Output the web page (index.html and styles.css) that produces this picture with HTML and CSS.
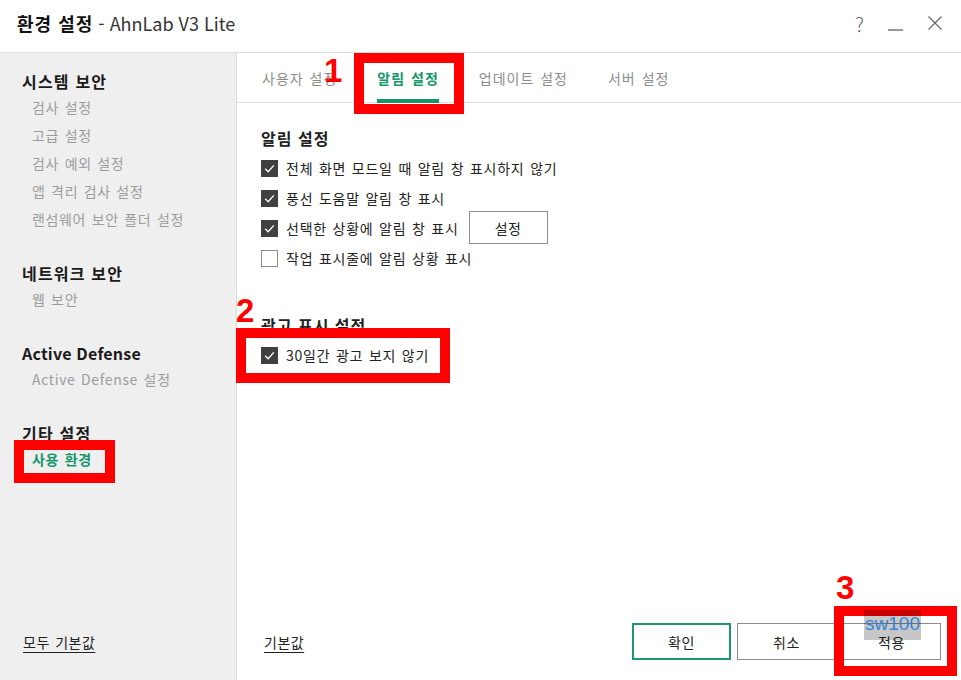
FILE: index.html
```html
<!DOCTYPE html>
<html lang="ko">
<head>
<meta charset="utf-8">
<title>환경 설정 - AhnLab V3 Lite</title>
<link rel="stylesheet" href="styles.css">
</head>
<body>
<div class="window">
  <header class="titlebar">
    <div class="title"><b>환경 설정</b> - AhnLab V3 Lite</div>
    <div class="controls">
      <span class="help">?</span>
      <svg class="ctl min" width="16" height="16" viewBox="0 0 16 16"><line x1="0" y1="15" x2="15" y2="15" stroke="#555" stroke-width="1.2"/></svg>
      <svg class="ctl" width="16" height="16" viewBox="0 0 16 16"><path d="M1.5 1.5 L14.5 14.5 M14.5 1.5 L1.5 14.5" stroke="#666" stroke-width="1.1" fill="none"/></svg>
    </div>
  </header>
  <div class="body">
    <aside class="sidebar">
      <div class="group">
        <div class="ghead">시스템 보안</div>
        <div class="gitem">검사 설정</div>
        <div class="gitem">고급 설정</div>
        <div class="gitem">검사 예외 설정</div>
        <div class="gitem">앱 격리 검사 설정</div>
        <div class="gitem">랜섬웨어 보안 폴더 설정</div>
      </div>
      <div class="group">
        <div class="ghead">네트워크 보안</div>
        <div class="gitem">웹 보안</div>
      </div>
      <div class="group">
        <div class="ghead latin">Active Defense</div>
        <div class="gitem">Active Defense 설정</div>
      </div>
      <div class="group">
        <div class="ghead">기타 설정</div>
        <div class="gitem active">사용 환경</div>
      </div>
      <div class="foot">
        <a class="link">모두 기본값</a>
      </div>
    </aside>
    <main class="main">
      <nav class="tabs">
        <span class="tab">사용자 설정</span>
        <span class="tab on">알림 설정</span>
        <span class="tab">업데이트 설정</span>
        <span class="tab">서버 설정</span>
      </nav>
      <section class="content">
        <div class="sec">
          <div class="shead">알림 설정</div>
          <div class="row"><span class="cb checked"><svg width="17" height="17" viewBox="0 0 17 17"><polyline points="4.2,8.8 7.2,11.8 12.8,5.4" fill="none" stroke="#fff" stroke-width="1.3"/></svg></span>전체 화면 모드일 때 알림 창 표시하지 않기</div>
          <div class="row"><span class="cb checked"><svg width="17" height="17" viewBox="0 0 17 17"><polyline points="4.2,8.8 7.2,11.8 12.8,5.4" fill="none" stroke="#fff" stroke-width="1.3"/></svg></span>풍선 도움말 알림 창 표시</div>
          <div class="row"><span class="cb checked"><svg width="17" height="17" viewBox="0 0 17 17"><polyline points="4.2,8.8 7.2,11.8 12.8,5.4" fill="none" stroke="#fff" stroke-width="1.3"/></svg></span>선택한 상황에 알림 창 표시<button class="btn small">설정</button></div>
          <div class="row"><span class="cb"></span>작업 표시줄에 알림 상황 표시</div>
        </div>
        <div class="sec sec2">
          <div class="shead">광고 표시 설정</div>
          <div class="row"><span class="cb checked"><svg width="17" height="17" viewBox="0 0 17 17"><polyline points="4.2,8.8 7.2,11.8 12.8,5.4" fill="none" stroke="#fff" stroke-width="1.3"/></svg></span>30일간 광고 보지 않기</div>
        </div>
      </section>
      <div class="foot mainfoot">
        <a class="link">기본값</a>
        <div class="buttons">
          <button class="btn primary">확인</button>
          <button class="btn">취소</button>
          <button class="btn">적용</button>
        </div>
      </div>
    </main>
  </div>

  <div class="mark box1"></div>
  <div class="mark box2"></div>
  <div class="mark box3"></div>
  <div class="mark box4"></div>
  <div class="num n1">1</div>
  <div class="num n2">2</div>
  <div class="num n3">3</div>
  <div class="wm">sw100</div>
</div>
</body>
</html>
```
FILE: styles.css
```css
* { box-sizing: border-box; }
html, body { margin: 0; padding: 0; }
body {
  width: 961px;
  height: 680px;
  overflow: hidden;
  background: #fff;
  font-family: "Noto Sans CJK KR", "Noto Sans", sans-serif;
  color: #222;
}
.window {
  position: relative;
  width: 961px;
  height: 680px;
  display: flex;
  flex-direction: column;
}
.titlebar {
  height: 53px;
  flex: none;
  border-bottom: 1px solid #dedede;
  display: flex;
  align-items: center;
  justify-content: space-between;
  padding: 0 18px 6px 17px;
}
.title {
  font-size: 18px;
  color: #333;
}
.title b { color: #111; font-weight: 700; letter-spacing: 1px; }
.controls {
  display: flex;
  align-items: center;
}
.help {
  font-size: 20px;
  color: #666;
  font-weight: 300;
  margin-right: 24px;
}
.ctl { display: block; }
.ctl.min { margin-right: 23px; }
.body {
  flex: 1;
  display: flex;
  min-height: 0;
}
.sidebar {
  width: 237px;
  flex: none;
  background: #efeff0;
  border-right: 1px solid #dadada;
  display: flex;
  flex-direction: column;
  padding-top: 16px;
}
.group { display: flex; flex-direction: column; margin-bottom: 28px; }
.ghead {
  height: 24px;
  line-height: 24px;
  padding-left: 22px;
  font-size: 16px;
  font-weight: 700;
  color: #1b1b1b;
  letter-spacing: 1.2px;
}
.ghead.latin { letter-spacing: 0.2px; }
.gitem {
  height: 28px;
  line-height: 28px;
  padding-left: 32px;
  font-size: 14px;
  color: #9c9c9c;
  word-spacing: 1px;
  letter-spacing: 0.65px;
}
.gitem.active { color: #14966a; font-weight: 700; }
.foot {
  margin-top: auto;
  height: 37px;
  margin-bottom: 20px;
  display: flex;
  align-items: center;
}
.sidebar .foot { padding-left: 23px; }
.link {
  font-size: 14px;
  color: #222;
  text-decoration: underline;
  text-underline-offset: 4px;
  word-spacing: 1px;
  letter-spacing: 0.5px;
}
.main {
  flex: 1;
  display: flex;
  flex-direction: column;
}
.tabs {
  height: 50px;
  flex: none;
  border-bottom: 1px solid #dedede;
  display: flex;
  gap: 40px;
  padding-left: 25px;
}
.tab {
  display: flex;
  align-items: center;
  font-size: 14px;
  color: #8d8d8d;
  padding-top: 1px;
  word-spacing: 1px;
  letter-spacing: 1px;
}
.tab.on {
  color: #14966a;
  font-weight: 700;
  border-bottom: 4px solid #14966a;
  margin-bottom: -1px;
  padding-top: 3px;
}
.content {
  padding: 20px 0 0 24px;
}
.sec { display: flex; flex-direction: column; }
.sec2 { margin-top: 37px; }
.shead {
  height: 30px;
  line-height: 30px;
  font-size: 16px;
  font-weight: 700;
  color: #222;
  letter-spacing: 1px;
}
.row {
  height: 30px;
  display: flex;
  align-items: center;
  font-size: 14px;
  color: #222;
  word-spacing: 1px;
  letter-spacing: 0.75px;
}
.cb {
  width: 17px;
  height: 17px;
  flex: none;
  margin-right: 8px;
  border: 1px solid #8a8a8a;
  background: #fff;
  display: block;
}
.cb.checked { background: #404040; border-color: #404040; }
.cb svg { display: block; margin: -1px; }
.btn {
  font-family: inherit;
  font-size: 14px;
  color: #222;
  background: #fff;
  border: 1px solid #8c8c8c;
  width: 99px;
  height: 37px;
  padding: 0;
  letter-spacing: 0.5px;
}
.btn.small {
  width: 79px;
  height: 33px;
  margin: -2px 0 -1px 10px;
}
.btn.primary { border: 2px solid #1c9673; }
.mainfoot {
  padding: 0 20px 0 27px;
  justify-content: space-between;
}
.buttons { display: flex; gap: 6px; }

/* annotation overlays */
.mark {
  position: absolute;
  border: 10px solid #ff0000;
}
.box1 { left: 354px; top: 53px; width: 110px; height: 61px; }
.box2 { left: 236px; top: 328px; width: 214px; height: 55px; }
.box3 { left: 834px; top: 606px; width: 123px; height: 70px; }
.box4 { left: 14px; top: 440px; width: 101px; height: 43px; }
.num {
  position: absolute;
  font-family: "Liberation Sans", Arial, sans-serif;
  font-weight: 700;
  font-size: 33px;
  line-height: 1;
  color: #ff0000;
}
.n1 { left: 324px; top: 54px; }
.n2 { left: 236px; top: 294px; }
.n3 { left: 836px; top: 571px; }
.wm {
  position: absolute;
  left: 864px;
  top: 610px;
  width: 57px;
  height: 30px;
  background: rgba(0, 0, 0, 0.22);
  color: #3485d8;
  font-family: "Liberation Sans", Arial, sans-serif;
  font-size: 19px;
  line-height: 28px;
  text-align: center;
}
```
